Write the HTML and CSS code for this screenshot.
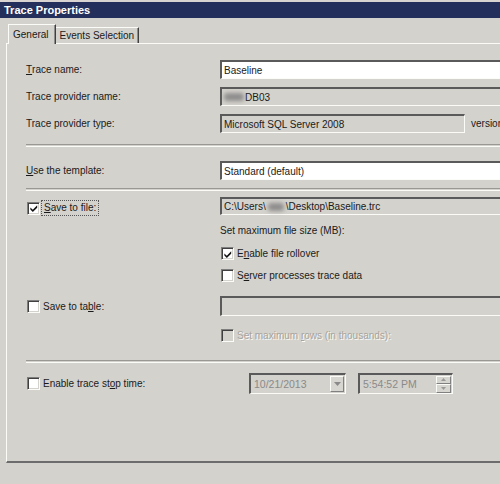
FILE: index.html
```html
<!DOCTYPE html>
<html>
<head>
<meta charset="utf-8">
<link rel="stylesheet" href="styles.css">
</head>
<body>
<div class="window">
  <div class="titlebar">Trace Properties</div>
  <div class="tabrow">
    <div class="tab tab-active">General</div>
    <div class="tab">Events Selection</div>
  </div>
  <div class="panel">
    <div class="row r1">
      <div class="label"><u>T</u>race name:</div>
      <div class="ctl"><div class="box box-white">Baseline</div></div>
    </div>
    <div class="row r2">
      <div class="label">Trace provider name:</div>
      <div class="ctl"><div class="box box-gray"><span class="blur b1"></span>DB03</div></div>
    </div>
    <div class="row r3">
      <div class="label">Trace provider type:</div>
      <div class="ctl ctl-flex"><div class="box box-gray box-short">Microsoft SQL Server 2008</div><span class="version">version</span></div>
    </div>
    <div class="sep s1"></div>
    <div class="row r4">
      <div class="label"><u>U</u>se the template:</div>
      <div class="ctl"><div class="box box-white">Standard (default)</div></div>
    </div>
    <div class="sep s2"></div>
    <div class="row r5">
      <div class="label cblabel">
        <span class="cb"><svg viewBox="0 0 11 11" width="11" height="11"><path d="M1.5 4.3 L4.2 7 L9 2 L9 4.6 L4.2 9.4 L1.5 6.7 Z" fill="#111"/></svg></span>
        <span class="focus"><u>S</u>ave to file:</span>
      </div>
      <div class="ctl">
        <div class="box box-gray box-path">C:\Users\<span class="blur b2"></span>\Desktop\Baseline.trc</div>
        <div class="text maxsize">Set maximum file size (MB):</div>
        <div class="cbrow cb1">
          <span class="cb"><svg viewBox="0 0 11 11" width="11" height="11"><path d="M1.5 4.3 L4.2 7 L9 2 L9 4.6 L4.2 9.4 L1.5 6.7 Z" fill="#111"/></svg></span>
          <span>E<u>n</u>able file rollover</span>
        </div>
        <div class="cbrow cb2">
          <span class="cb"></span>
          <span>S<u>e</u>rver processes trace data</span>
        </div>
      </div>
    </div>
    <div class="row r6">
      <div class="label cblabel">
        <span class="cb"></span>
        <span class="cbtext">Save to ta<u>b</u>le:</span>
      </div>
      <div class="ctl">
        <div class="box box-gray box-table"></div>
        <div class="cbrow cb3 disabled">
          <span class="cb cb-dis"></span>
          <span>Set maximum <u>r</u>ows (in thousands):</span>
        </div>
      </div>
    </div>
    <div class="sep s3"></div>
    <div class="row r7">
      <div class="label cblabel">
        <span class="cb"></span>
        <span class="cbtext">Enable trace st<u>o</u>p time:</span>
      </div>
      <div class="ctl ctl-flex ctl-time">
        <div class="box box-gray picker date">
          <span class="ptext">10/21/2013</span>
          <span class="dropbtn"><svg viewBox="0 0 7 4" width="7" height="4"><path d="M0 0 H7 L3.5 4 Z" fill="#8a8a8a"/></svg></span>
        </div>
        <div class="box box-gray picker time">
          <span class="ptext">5:54:52 PM</span>
          <span class="spin"><span class="spinbtn"><svg viewBox="0 0 5 3" width="5" height="3"><path d="M0 3 H5 L2.5 0 Z" fill="#9a9a9a"/></svg></span><span class="spinbtn"><svg viewBox="0 0 5 3" width="5" height="3"><path d="M0 0 H5 L2.5 3 Z" fill="#9a9a9a"/></svg></span></span>
        </div>
      </div>
    </div>
  </div>
  <div class="footer"></div>
</div>
</body>
</html>
```

FILE: styles.css
```css
html, body {
  margin: 0;
  padding: 0;
}
body {
  background: #d4d2cc;
  font-family: "Liberation Sans", Arial, sans-serif;
  font-size: 10px;
  color: #1a1a1a;
}
.window {
  width: 500px;
  height: 484px;
  overflow: hidden;
  background: #d4d2cc;
}
.titlebar {
  border-top: 2px solid #d9d4d2;
  height: 16px;
  line-height: 16px;
  background: #252f5b;
  color: #fff;
  font-weight: bold;
  font-size: 11px;
  padding-left: 4px;
}
.tabrow {
  margin-top: 6px;
  margin-left: 6px;
  padding-left: 2px;
  height: 19px;
  border-bottom: 1px solid #fbfbf8;
  display: flex;
  align-items: flex-end;
}
.tab {
  height: 15px;
  line-height: 15px;
  padding: 0 4px 0 4px;
  border-top: 1px solid #fbfbf8;
  border-left: 1px solid #fbfbf8;
  border-right: 1px solid #404040;
  box-shadow: inset -1px 0 0 #8c8c8c;
  box-sizing: content-box;
  background: #d4d2cc;
}
.tab-active {
  height: 19px;
  line-height: 19px;
  margin-bottom: -1px;
  padding: 0 6px 0 4px;
}
.tab-active + .tab {
  border-left: none;
}
.panel {
  margin-left: 6px;
  width: 560px;
  height: 401px;
  border-left: 1px solid #fbfbf8;
  border-bottom: 2px solid #6c6c6c;
  padding-left: 19px;
  padding-top: 16px;
  box-sizing: content-box;
}
.row {
  display: grid;
  grid-template-columns: 194px 1fr;
  align-items: center;
}
.label {
  display: flex;
  align-items: center;
  white-space: nowrap;
}
.ctl-flex {
  display: flex;
  align-items: center;
}
.box {
  height: 19px;
  line-height: 17px;
  box-sizing: border-box;
  border-top: 2px solid #5a5a5a;
  border-left: 2px solid #5a5a5a;
  border-bottom: 1px solid #fbfbf8;
  border-right: 1px solid #fbfbf8;
  padding-left: 2px;
  white-space: nowrap;
  display: flex;
  align-items: center;
}
.box-white {
  background: #fff;
}
.box-gray {
  background: #d4d2cc;
}
.box-short {
  width: 245px;
}
.version {
  margin-left: 6px;
}
.blur {
  display: inline-block;
  height: 8px;
  background: #8e8c8c;
  filter: blur(2px);
  border-radius: 3px;
}
.b1 { width: 20px; margin-right: 1px; }
.b2 { width: 16px; margin: 0 2px; }
.r2 { margin-top: 8px; }
.r3 { margin-top: 8px; }
.sep {
  height: 1px;
  border-top: 1px solid #9a9892;
  border-bottom: 1px solid #fbfbf8;
  margin-right: 0;
}
.s1 { margin-top: 11px; }
.r4 { margin-top: 14px; }
.s2 { margin-top: 8px; }
.r5 {
  margin-top: 6px;
  align-items: start;
}
.r5 .cblabel {
  margin-top: 3px;
}
.cb {
  display: inline-flex;
  align-items: center;
  justify-content: center;
  width: 13px;
  height: 13px;
  box-sizing: border-box;
  background: #fff;
  border-top: 1px solid #7e7e7e;
  border-left: 1px solid #7e7e7e;
  border-bottom: 1px solid #fbfbf8;
  border-right: 1px solid #fbfbf8;
  box-shadow: inset 1px 1px 0 #404040, inset -1px -1px 0 #d4d2cc;
  flex: none;
}
.cb svg {
  display: block;
  margin: 1px 0 0 1px;
}
.cb-dis {
  background: #d4d2cc;
}
.cblabel .cb {
  margin-left: 1px;
}
.focus {
  margin-left: 1px;
  padding: 1px 2px 2px 2px;
  border: 1px dotted #555;
}
.cbtext {
  margin-left: 3px;
}
.box-path {
  height: 18px;
}
.text {
  line-height: 12px;
}
.maxsize {
  margin-top: 10px;
}
.cbrow {
  display: flex;
  align-items: center;
  gap: 3px;
  margin-left: 1px;
  height: 13px;
}
.cb1 { margin-top: 10px; }
.cb2 { margin-top: 9px; }
.r6 {
  margin-top: 14px;
  align-items: start;
}
.r6 .cblabel {
  margin-top: 4px;
}
.box-table {
  height: 20px;
}
.cb3 { margin-top: 13px; }
.disabled {
  color: #a6a49e;
  text-shadow: 1px 1px 0 #fbfbf8;
}
.s3 { margin-top: 18px; }
.r7 { margin-top: 10px; }
.ctl-time {
  margin-left: 29px;
  gap: 12px;
}
.picker {
  height: 21px;
  justify-content: space-between;
  color: #8a8a8a;
  padding-right: 1px;
  padding-left: 3px;
  font-size: 10.5px;
}
.date { width: 97px; }
.time { width: 95px; }
.dropbtn {
  width: 14px;
  height: 16px;
  box-sizing: border-box;
  background: #d8d6d0;
  border-top: 1px solid #fbfbf8;
  border-left: 1px solid #fbfbf8;
  border-bottom: 1px solid #808080;
  border-right: 1px solid #808080;
  display: flex;
  align-items: center;
  justify-content: center;
}
.spin {
  display: flex;
  flex-direction: column;
  width: 15px;
  height: 17px;
}
.spinbtn {
  flex: 1;
  box-sizing: border-box;
  background: #d8d6d0;
  border-top: 1px solid #fbfbf8;
  border-left: 1px solid #fbfbf8;
  border-bottom: 1px solid #808080;
  border-right: 1px solid #808080;
  display: flex;
  align-items: center;
  justify-content: center;
}
.footer {
  height: 33px;
  border-bottom: 2px solid #6c6c6c;
}
```
